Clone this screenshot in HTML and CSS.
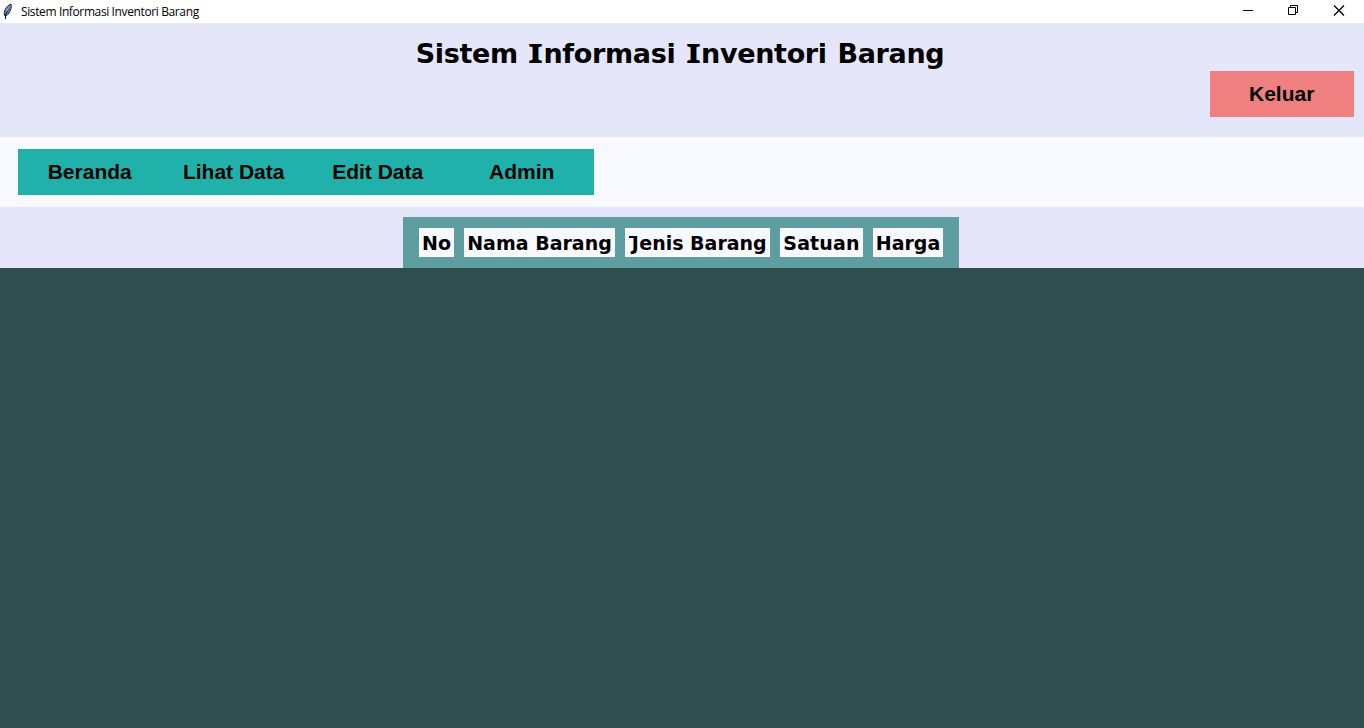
FILE: index.html
```html
<!DOCTYPE html>
<html lang="id">
<head>
<meta charset="utf-8">
<title>Sistem Informasi Inventori Barang</title>
<link rel="stylesheet" href="styles.css">
</head>
<body>
<div class="window">
  <div class="titlebar">
    <svg class="feather" width="12" height="18" viewBox="0 0 12 18">
      <path d="M2.500 13.500C1.500 10 3.300 4.500 9 2C10 5.500 8.200 10.500 4.800 13.500Z" fill="#6586a8" stroke="#1b2838" stroke-width="1"/>
      <path d="M3.500 17.200V13L7.500 4.800" fill="none" stroke="#101820" stroke-width="1"/>
      <path d="M4.300 9.500L7.600 4.300" fill="none" stroke="#b7cde2" stroke-width="1"/>
    </svg>
    <span class="caption">Sistem Informasi Inventori Barang</span>
    <div class="controls">
      <svg class="control" width="46" height="23" viewBox="0 0 46 23"><path d="M19 10.5H29" stroke="#000"/></svg>
      <svg class="control" width="46" height="23" viewBox="0 0 46 23"><path d="M18.500 7.500H25.500V14.500H18.500ZM20.500 7V5.500H27.500V12.500H26" fill="none" stroke="#000"/></svg>
      <svg class="control" width="46" height="23" viewBox="0 0 46 23"><path d="M18 5.500L28 15.500M28 5.500L18 15.500" stroke="#000" stroke-width="1.250"/></svg>
    </div>
  </div>
  <header class="header">
    <h1 class="heading">Sistem <span class="cap-i">I</span>nformasi <span class="cap-i">I</span>nventori Barang</h1>
    <button class="button exit">Keluar</button>
  </header>
  <nav class="nav">
    <button class="button">Beranda</button>
    <button class="button">Lihat Data</button>
    <button class="button">Edit Data</button>
    <button class="button">Admin</button>
  </nav>
  <main class="content">
    <div class="table-head">
      <div class="cell no">No</div>
      <div class="cell name">Nama Barang</div>
      <div class="cell kind"><span class="cap-j">J</span>enis Barang</div>
      <div class="cell unit">Satuan</div>
      <div class="cell price">Harga</div>
    </div>
  </main>
</div>
</body>
</html>
```
FILE: styles.css
```css
* { box-sizing: border-box; }
body { margin: 0; color: #000; }
.window {
  display: flex;
  flex-direction: column;
  height: 728px;
  overflow: hidden;
  background: #2f4f4f;
}
.titlebar {
  display: flex;
  align-items: center;
  height: 23px;
  padding: 0 2px;
  background: #fff;
}
.feather { flex: none; margin-bottom: 2px; }
.caption {
  margin-left: 7px;
  font: 12px/23px "Open Sans", sans-serif;
  letter-spacing: -0.38px;
  white-space: nowrap;
}
.controls { display: flex; margin-left: auto; }
.control { display: block; }
.header {
  display: flex;
  flex-direction: column;
  height: 114px;
  padding: 14px 10px 0;
  background: #e6e6fa;
}
.heading {
  margin: 0;
  height: 34px;
  padding-right: 4px;
  font: bold 27px/34px "DejaVu Sans", sans-serif;
  letter-spacing: -0.33px;
  word-spacing: 1.6px;
  text-align: center;
  white-space: nowrap;
}
.cap-i {
  display: inline-block;
  width: 15px;
  font-family: "Noto Sans", sans-serif;
  font-size: 27.500px;
  line-height: 1;
  letter-spacing: 0;
  transform: scaleX(1.4);
}
.button {
  width: 144px;
  height: 46px;
  padding: 0 0.600px 0 0;
  border: 0;
  background: #20b2aa;
  color: #000;
  font: bold 21px/46px "Liberation Sans", Arial, sans-serif;
  white-space: nowrap;
}
.exit { align-self: flex-end; background: #f08080; }
.nav {
  display: flex;
  height: 70px;
  padding: 12px 18px;
  background: #f8f8ff;
}
.content {
  display: flex;
  justify-content: center;
  height: 61px;
  padding: 10px 2px 0 0;
  background: #e6e6fa;
}
.table-head {
  display: flex;
  gap: 10px;
  width: 556px;
  height: 51px;
  padding: 11px 16px;
  background: #5f9ea0;
}
.cell {
  height: 29px;
  background: #f8f8ff;
  font: bold 19px/30px "DejaVu Sans", sans-serif;
  text-align: center;
  white-space: nowrap;
}
.no { width: 35px; }
.name { width: 151px; }
.kind { width: 145px; }
.unit { width: 83px; letter-spacing: 0.15px; }
.price { width: 70px; }
.cap-j {
  position: relative;
  display: inline-block;
  width: 11px;
  padding-left: 3px;
  line-height: 1;
}
/* Left serif of the J */
.cap-j::before {
  content: "";
  position: absolute;
  left: 1px;
  top: 2px;
  width: 5px;
  height: 2px;
  background: #000;
}
```
